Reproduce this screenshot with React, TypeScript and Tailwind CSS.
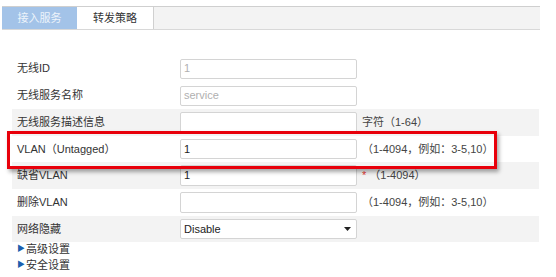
import React from "react";

const font = { fontFamily: '"Liberation Sans", "Noto Sans CJK SC", sans-serif' };

function Row({
  label,
  gray,
  h,
  children,
  hint,
}: {
  label: string;
  gray?: boolean;
  h: string;
  children: React.ReactNode;
  hint?: React.ReactNode;
}) {
  return (
    <div className={`flex items-center ${h} ${gray ? "bg-[#f3f3f3]" : ""}`}>
      <div className="w-[168px] pl-[5px] text-[11px] text-[#333]">{label}</div>
      <div className="w-[182px] shrink-0">{children}</div>
      <div className="text-[11px] text-[#444]">{hint}</div>
    </div>
  );
}

function Input({ value, muted, h = "h-[20px]" }: { value: string; muted?: boolean; h?: string }) {
  return (
    <div
      className={`w-[177px] ${h} border border-[#d4d4d4] rounded-[2px] bg-white flex items-center px-[3px] text-[11px] ${
        muted ? "text-[#b0b0b0]" : "text-[#222]"
      }`}
    >
      {value}
    </div>
  );
}

export default function App() {
  return (
    <div className="w-[556px] h-[277px] bg-white relative overflow-hidden" style={font}>
      <div className="pt-[6px] pl-[2px] w-[540px]">
        <div className="flex h-[24px] bg-[#f3f3f3] border-t border-[#cfcfcf] border-b border-b-[#d8d8d8]">
          <div className="w-[75px] bg-[#a3c3e8] text-[#eef4fb] text-[11px] flex items-center justify-center">
            接入服务
          </div>
          <div className="w-[77px] bg-white text-[#333] text-[11px] flex items-center justify-center border-r border-[#d0d0d0]">
            转发策略
          </div>
        </div>
      </div>
      <div className="mt-[25px] ml-[12px] w-[527px]">
        <Row label="无线ID" h="h-[27px]">
          <Input value="1" muted />
        </Row>
        <Row label="无线服务名称" h="h-[27px]">
          <Input value="service" muted />
        </Row>
        <Row label="无线服务描述信息" h="h-[27px]" gray hint="字符（1-64）">
          <Input value="" h="h-[21px]" />
        </Row>
        <Row label="VLAN（Untagged）" h="h-[26px]" hint="（1-4094，例如：3-5,10）">
          <Input value="1" />
        </Row>
        <Row
          label="缺省VLAN"
          h="h-[27px]"
          gray
          hint={
            <span>
              <span className="text-[#e53935]">*</span> （1-4094）
            </span>
          }
        >
          <Input value="1" h="h-[21px]" />
        </Row>
        <Row label="删除VLAN" h="h-[27px]" hint="（1-4094，例如：3-5,10）">
          <Input value="" h="h-[21px]" />
        </Row>
        <Row label="网络隐藏" h="h-[26px]" gray>
          <div className="w-[177px] h-[20px] border border-[#d4d4d4] rounded-[2px] bg-white flex items-center justify-between px-[3px] text-[11px] text-[#222]">
            <span>Disable</span>
            <svg width="7" height="4" viewBox="0 0 7 4" className="mr-[2px]">
              <path d="M0 0h7L3.5 4z" fill="#222" />
            </svg>
          </div>
        </Row>
        <div className="pl-[5px] text-[11px] text-[#333] leading-[16px] -mt-[1px]">
          <div className="flex items-center">
            <span className="text-[#1b5fae] text-[8px] mr-[1px]">▶</span>高级设置
          </div>
          <div className="flex items-center">
            <span className="text-[#1b5fae] text-[8px] mr-[1px]">▶</span>安全设置
          </div>
        </div>
      </div>
      <div className="absolute left-[7px] top-[131px] w-[490px] h-[38px] border-[3px] border-[#e8000b] shadow-[2px_3px_4px_rgba(0,0,0,0.35)]" />
    </div>
  );
}
